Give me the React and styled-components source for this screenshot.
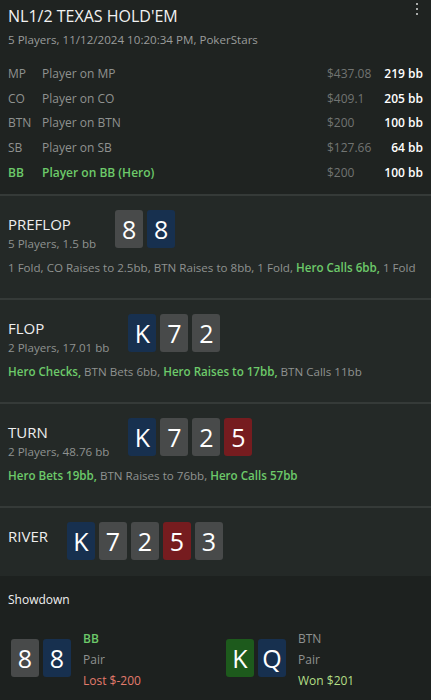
import React from "react";
import styled, { createGlobalStyle } from "styled-components";

const Global = createGlobalStyle`
  html, body { margin: 0; padding: 0; background: #1d211f; }
  body { font-family: "Segoe UI", "Open Sans", "Noto Sans", sans-serif; -webkit-font-smoothing: antialiased; }
  * { box-sizing: border-box; }
`;

const Page = styled.div`
  width: 431px;
  min-height: 100vh;
  background: #1d211f;
  overflow: hidden;
`;

const Header = styled.header`
  position: relative;
  background: #1f2321;
  padding: 4px 8px 9px 8px;
`;

const Title = styled.h1`
  margin: 0;
  font-size: 16px;
  line-height: 24px;
  font-weight: 400;
  color: #f2f2f2;
`;

const Subtitle = styled.div`
  margin-top: 2px;
  font-size: 11.6px;
  line-height: 20px;
  color: #9a9c9b;
`;

const MenuDots = styled.div`
  position: absolute;
  top: 3px;
  right: 13px;
  display: flex;
  flex-direction: column;
  gap: 3px;
  span {
    width: 2px;
    height: 2px;
    background: #a8aaa9;
  }
`;

const Players = styled.div`
  margin-top: 11px;
  display: flex;
  flex-direction: column;
`;

const PlayerRow = styled.div`
  display: grid;
  grid-template-columns: 34px 1fr 56px 40px;
  align-items: center;
  height: 24.75px;
  font-size: 12px;
  white-space: nowrap;
  color: ${(p) => (p.$hero ? "#6dca6a" : "#8f9290")};
  font-weight: ${(p) => (p.$hero ? 600 : 400)};
`;

const Money = styled.span`
  color: #717472;
  font-weight: 400;
`;

const Stack = styled.span`
  text-align: right;
  color: #ffffff;
  font-weight: 600;
`;

const Section = styled.section`
  background: #242927;
  border-top: 2px solid #353a38;
  padding: 14px 8px ${(p) => (p.$compact ? "16px" : "22px")} 8px;
`;

const StreetHead = styled.div`
  display: flex;
  align-items: flex-start;
  gap: 19px;
`;

const StreetInfo = styled.div`
  display: flex;
  flex-direction: column;
  padding-top: 4px;
`;

const StreetName = styled.div`
  font-size: 15px;
  line-height: 20px;
  color: #eeeeee;
`;

const StreetMeta = styled.div`
  font-size: 11.6px;
  line-height: 20px;
  color: #8f9290;
`;

const Cards = styled.div`
  display: flex;
  gap: 4px;
`;

const suitColors = {
  gray: "#484a4a",
  blue: "#17304f",
  red: "#761c1f",
  green: "#1d5a1c",
};

const Card = styled.div`
  width: 28px;
  height: 38px;
  border-radius: 3px;
  background: ${(p) => suitColors[p.$suit]};
  color: #ffffff;
  font-size: 25px;
  line-height: 38px;
  text-align: center;
`;

const Actions = styled.div`
  margin-top: 6px;
  font-size: 11.6px;
  line-height: 16px;
  color: #8f9290;
  white-space: nowrap;
  overflow: hidden;
`;

const Act = styled.span`
  color: ${(p) => (p.$hero ? "#6dca6a" : "#8f9290")};
  font-weight: ${(p) => (p.$hero ? 600 : 400)};
`;

const Showdown = styled.section`
  background: #1d211f;
  padding: 15px 0 10px 0;
`;

const ShowdownTitle = styled.div`
  padding-left: 8px;
  font-size: 12px;
  line-height: 18px;
  color: #f0f0f0;
`;

const Hands = styled.div`
  margin-top: 16px;
  display: grid;
  grid-template-columns: 215px 1fr;
  padding-left: 11px;
`;

const Hand = styled.div`
  display: flex;
  align-items: center;
  gap: 12px;
`;

const HandInfo = styled.div`
  display: flex;
  flex-direction: column;
  font-size: 12px;
  line-height: 21px;
  padding-top: 3px;
`;

const HandPos = styled.span`
  color: ${(p) => (p.$hero ? "#6dca6a" : "#8f9290")};
  font-weight: ${(p) => (p.$hero ? 600 : 400)};
`;

const HandRank = styled.span`
  color: #8f9290;
`;

const Result = styled.span`
  color: ${(p) => (p.$won ? "#b3df86" : "#e27b6c")};
`;

const players = [
  { pos: "MP", name: "Player on MP", money: "$437.08", bb: "219 bb" },
  { pos: "CO", name: "Player on CO", money: "$409.1", bb: "205 bb" },
  { pos: "BTN", name: "Player on BTN", money: "$200", bb: "100 bb" },
  { pos: "SB", name: "Player on SB", money: "$127.66", bb: "64 bb" },
  { pos: "BB", name: "Player on BB (Hero)", money: "$200", bb: "100 bb", hero: true },
];

const board = [
  ["K", "blue"],
  ["7", "gray"],
  ["2", "gray"],
  ["5", "red"],
  ["3", "gray"],
];

const streets = [
  {
    name: "PREFLOP",
    meta: "5 Players, 1.5 bb",
    cards: [["8", "gray"], ["8", "blue"]],
    actions: [
      ["1 Fold, CO Raises to 2.5bb, BTN Raises to 8bb, 1 Fold, ", false],
      ["Hero Calls 6bb, ", true],
      ["1 Fold", false],
    ],
  },
  {
    name: "FLOP",
    meta: "2 Players, 17.01 bb",
    cards: board.slice(0, 3),
    actions: [
      ["Hero Checks, ", true],
      ["BTN Bets 6bb, ", false],
      ["Hero Raises to 17bb, ", true],
      ["BTN Calls 11bb", false],
    ],
  },
  {
    name: "TURN",
    meta: "2 Players, 48.76 bb",
    cards: board.slice(0, 4),
    actions: [
      ["Hero Bets 19bb, ", true],
      ["BTN Raises to 76bb, ", false],
      ["Hero Calls 57bb", true],
    ],
  },
  { name: "RIVER", cards: board, actions: null },
];

function CardRow({ cards }) {
  return (
    <Cards>
      {cards.map(([r, s], i) => (
        <Card key={i} $suit={s}>{r}</Card>
      ))}
    </Cards>
  );
}

export default function App() {
  return (
    <Page>
      <Global />
      <Header>
        <Title>NL1/2 TEXAS HOLD'EM</Title>
        <Subtitle>5 Players, 11/12/2024 10:20:34 PM, PokerStars</Subtitle>
        <MenuDots><span /><span /><span /></MenuDots>
        <Players>
          {players.map((p) => (
            <PlayerRow key={p.pos} $hero={p.hero}>
              <span>{p.pos}</span>
              <span>{p.name}</span>
              <Money>{p.money}</Money>
              <Stack>{p.bb}</Stack>
            </PlayerRow>
          ))}
        </Players>
      </Header>
      {streets.map((s) => (
        <Section key={s.name} $compact={!s.actions}>
          <StreetHead>
            <StreetInfo>
              <StreetName>{s.name}</StreetName>
              {s.meta && <StreetMeta>{s.meta}</StreetMeta>}
            </StreetInfo>
            <CardRow cards={s.cards} />
          </StreetHead>
          {s.actions && (
            <Actions>
              {s.actions.map(([t, h], i) => (
                <Act key={i} $hero={h}>{t}</Act>
              ))}
            </Actions>
          )}
        </Section>
      ))}
      <Showdown>
        <ShowdownTitle>Showdown</ShowdownTitle>
        <Hands>
          <Hand>
            <CardRow cards={[["8", "gray"], ["8", "blue"]]} />
            <HandInfo>
              <HandPos $hero>BB</HandPos>
              <HandRank>Pair</HandRank>
              <Result>Lost $-200</Result>
            </HandInfo>
          </Hand>
          <Hand>
            <CardRow cards={[["K", "green"], ["Q", "blue"]]} />
            <HandInfo>
              <HandPos>BTN</HandPos>
              <HandRank>Pair</HandRank>
              <Result $won>Won $201</Result>
            </HandInfo>
          </Hand>
        </Hands>
      </Showdown>
    </Page>
  );
}
